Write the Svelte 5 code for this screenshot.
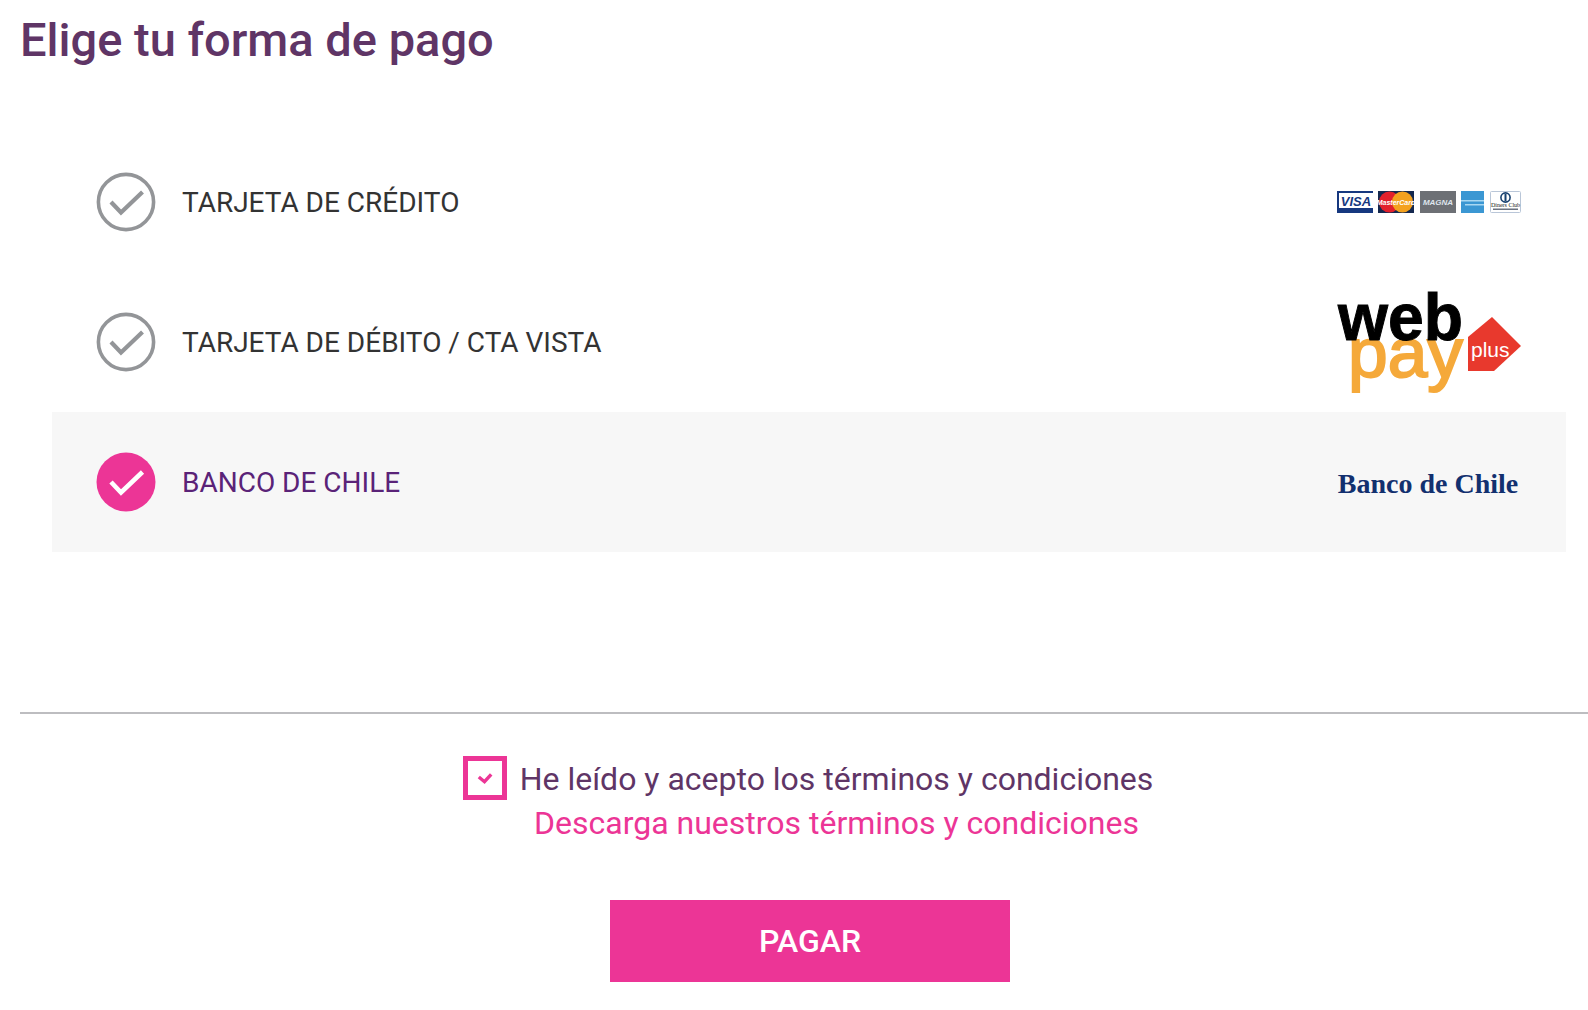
<script>
    const methods = [
        { id: 'credito', label: 'TARJETA DE CRÉDITO', logo: 'cards' },
        { id: 'debito', label: 'TARJETA DE DÉBITO / CTA VISTA', logo: 'webpay' },
        { id: 'banco', label: 'BANCO DE CHILE', logo: 'banco' }
    ];

    let selected = $state('banco');
    let accepted = $state(true);
</script>

<main class="page">
    <h1>Elige tu forma de pago</h1>

    <ul class="methods">
        {#each methods as method}
            <li>
                <button
                    type="button"
                    class="method"
                    class:active={selected === method.id}
                    onclick={() => (selected = method.id)}
                >
                    <svg class="tick" viewBox="0 0 60 60" aria-hidden="true">
                        {#if selected === method.id}
                            <circle cx="30" cy="30" r="29.5" fill="#ec3596" />
                            <path d="M15 30 L25 40.5 L46.5 20" fill="none" stroke="#fff" stroke-width="4.6" />
                        {:else}
                            <circle cx="30" cy="30" r="27.6" fill="none" stroke="#939598" stroke-width="3.6" />
                            <path d="M15 30 L25 40.5 L46.5 20" fill="none" stroke="#939598" stroke-width="4.2" />
                        {/if}
                    </svg>
                    <span class="label">{method.label}</span>

                    {#if method.logo === 'cards'}
                        <svg class="logo" width="186" height="30" viewBox="0 0 186 30" aria-hidden="true">
                            <rect x="2" y="4" width="36" height="22" fill="#fff" />
                            <rect x="2" y="4" width="36" height="2" fill="#16387f" />
                            <rect x="2" y="21" width="36" height="5" fill="#16387f" />
                            <rect x="2" y="6" width="2" height="15" fill="#16387f" />
                            <text x="21" y="19" text-anchor="middle" class="visa">VISA</text>

                            <rect x="43" y="4" width="36" height="22" fill="#14284f" />
                            <circle cx="54.5" cy="15" r="10.5" fill="#e2202c" />
                            <circle cx="67.5" cy="15" r="10.5" fill="#f4a11e" />
                            <text x="61" y="18" text-anchor="middle" class="mc">MasterCard</text>

                            <rect x="85" y="4" width="36" height="22" fill="#6d7075" />
                            <text x="103" y="18" text-anchor="middle" class="magna">MAGNA</text>

                            <rect x="126" y="4" width="23" height="22" fill="#3b97d3" />
                            <rect x="126" y="13" width="23" height="1.5" fill="#a9d8f2" />
                            <rect x="130" y="17" width="19" height="1.5" fill="#a9d8f2" />

                            <rect x="155.5" y="4.5" width="30" height="21" rx="1" fill="#fff" stroke="#b9c6d8" />
                            <circle cx="170.5" cy="10.5" r="4.6" fill="none" stroke="#17406f" stroke-width="1.6" />
                            <rect x="169.5" y="7" width="2" height="7" fill="#17406f" />
                            <text x="170.5" y="20" text-anchor="middle" class="diners">Diners Club</text>
                            <rect x="158" y="21.5" width="25" height="1.5" fill="#6b7280" />
                        </svg>
                    {:else if method.logo === 'webpay'}
                        <svg class="logo" width="186" height="140" viewBox="0 0 186 140" aria-hidden="true">
                            <text x="13" y="105" class="pay" textLength="115" lengthAdjust="spacingAndGlyphs">pay</text>
                            <text x="3" y="68" class="web" textLength="125" lengthAdjust="spacingAndGlyphs">web</text>
                            <path d="M133 65 L157 45 L186 74 L159 99 L133 99 Z" fill="#e8392d" />
                            <text x="136" y="85" class="plus">plus</text>
                        </svg>
                    {:else}
                        <span class="banco-logo">Banco de Chile</span>
                    {/if}
                </button>
            </li>
        {/each}
    </ul>

    <hr />

    <div class="terms">
        <div class="accept">
            <button
                type="button"
                class="checkbox"
                aria-label="Aceptar términos"
                onclick={() => (accepted = !accepted)}
            >
                {#if accepted}
                    <svg width="16" height="14" viewBox="0 0 16 14" aria-hidden="true">
                        <path d="M1.8 6 L7.5 10.7 L14.2 3.3" fill="none" stroke="#ec3596" stroke-width="3.4" />
                    </svg>
                {/if}
            </button>
            <span class="accept-text">He leído y acepto los términos y condiciones</span>
        </div>
        <a href="#terminos" class="download">Descarga nuestros términos y condiciones</a>
    </div>

    <div class="actions">
        <button type="button" class="pay-button">PAGAR</button>
    </div>
</main>

<style>
    :global(body) {
        margin: 0;
        background: #fff;
    }

    .page {
        height: 1010px;
        overflow: hidden;
        font-family: Roboto, "Liberation Sans", sans-serif;
    }

    h1 {
        margin: 0;
        padding: 13px 0 0 20px;
        height: 132px;
        box-sizing: border-box;
        font-size: 47px;
        line-height: 54px;
        font-weight: 500;
        color: #5f3566;
    }

    .methods {
        list-style: none;
        margin: 0 22px 0 52px;
        padding: 0;
    }

    .method {
        display: flex;
        align-items: center;
        width: 100%;
        height: 140px;
        padding: 0 45px 0 44px;
        border: 0;
        background: none;
        font: inherit;
        text-align: left;
        cursor: pointer;
    }

    .method.active {
        background: #f7f7f7;
    }

    .tick {
        width: 60px;
        height: 60px;
        flex: none;
    }

    .label {
        flex: 1;
        margin-left: 26px;
        font-size: 28px;
        color: #333;
    }

    .active .label {
        color: #5a2378;
    }

    .logo {
        flex: none;
        display: block;
    }

    .visa {
        font: italic 700 13px "Liberation Sans", sans-serif;
        fill: #16387f;
    }

    .mc {
        font: italic 700 7px "Liberation Sans", sans-serif;
        fill: #fff;
    }

    .magna {
        font: italic 700 8px "Liberation Sans", sans-serif;
        fill: #dfe6ee;
    }

    .diners {
        font: 6px "Liberation Serif", serif;
        fill: #222;
    }

    .web {
        font: 700 67px "Liberation Sans", sans-serif;
        fill: #000;
        stroke: #000;
        stroke-width: 1;
    }

    .pay {
        font: 400 70px "Liberation Sans", sans-serif;
        fill: #f5a93a;
        stroke: #f5a93a;
        stroke-width: 2;
    }

    .plus {
        font: 400 21px "Liberation Sans", sans-serif;
        fill: #fff;
    }

    .banco-logo {
        flex: none;
        width: 186px;
        padding-top: 4px;
        white-space: nowrap;
        text-align: center;
        font-family: "Liberation Serif", serif;
        font-weight: 700;
        font-size: 28px;
        color: #12306f;
    }

    hr {
        margin: 160px 0 0 20px;
        border: 0;
        border-top: 2px solid #bdbdc0;
    }

    .terms {
        display: flex;
        flex-direction: column;
        align-items: center;
        margin-top: 41px;
        padding-left: 28px;
        font-size: 32px;
        line-height: 44px;
    }

    .accept {
        display: flex;
        align-items: center;
        gap: 13px;
        color: #5f3566;
    }

    .accept-text {
        padding-top: 2px;
    }

    .checkbox {
        display: flex;
        align-items: center;
        justify-content: center;
        flex: none;
        width: 44px;
        height: 44px;
        padding: 0;
        box-sizing: border-box;
        border: 5px solid #ec3596;
        background: #fff;
        cursor: pointer;
    }

    .download {
        margin-left: 57px;
        color: #ec3596;
        text-decoration: none;
    }

    .actions {
        display: flex;
        justify-content: center;
        margin-top: 55px;
        padding-left: 32px;
    }

    .pay-button {
        width: 400px;
        height: 82px;
        border: 0;
        background: #ec3596;
        color: #fff;
        font: 500 32px Roboto, "Liberation Sans", sans-serif;
        cursor: pointer;
    }
</style>
